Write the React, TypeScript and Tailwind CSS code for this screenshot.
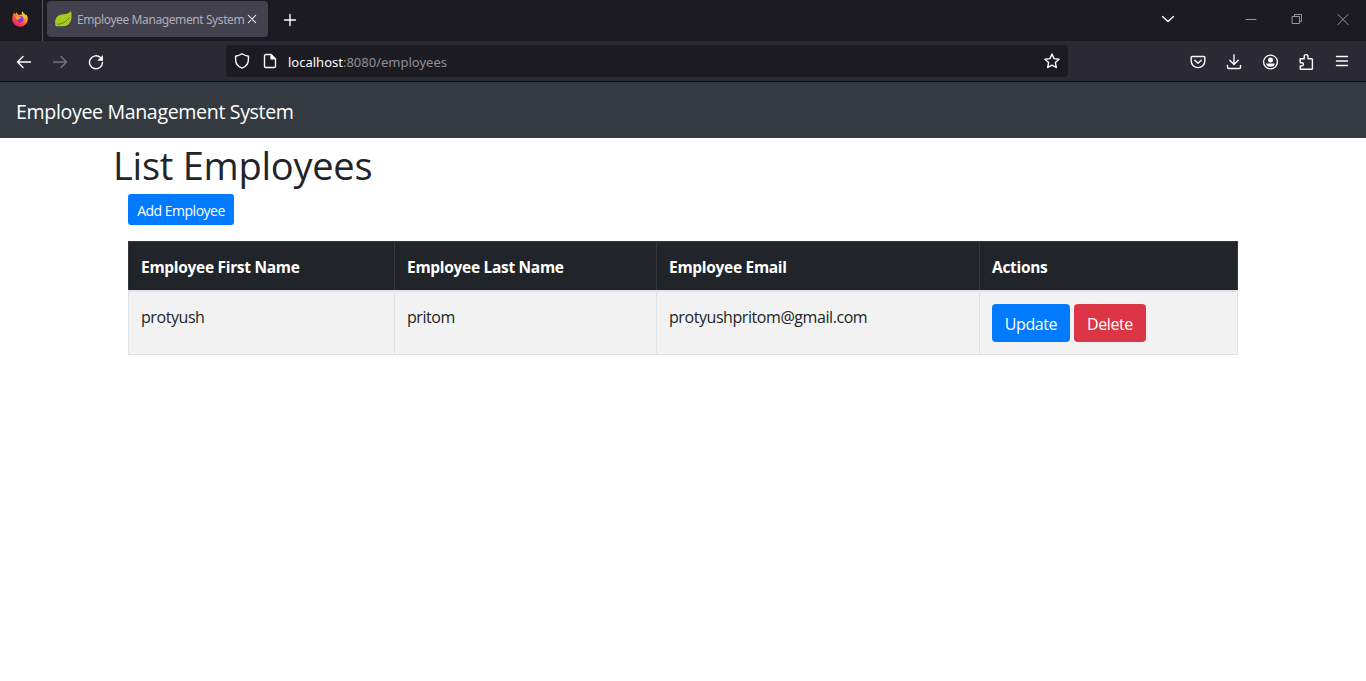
import React from 'react';

const stroke = { fill: 'none', stroke: 'currentColor', strokeLinecap: 'round', strokeLinejoin: 'round' } as const;

function Icon({ children, className = 'size-4 text-[#fbfbfe]', width = 1.4 }: { children: React.ReactNode; className?: string; width?: number }) {
  return (
    <svg viewBox="0 0 16 16" className={`block shrink-0 ${className}`} {...stroke} strokeWidth={width}>
      {children}
    </svg>
  );
}

function FirefoxLogo() {
  return (
    <svg viewBox="0 0 16 16" className="block size-4">
      <defs>
        <linearGradient id="fox" x1="0.85" y1="0.05" x2="0.2" y2="0.95">
          <stop offset="0" stopColor="#fff24a" />
          <stop offset="0.35" stopColor="#ff9a2b" />
          <stop offset="0.65" stopColor="#ff4a3d" />
          <stop offset="1" stopColor="#e7167f" />
        </linearGradient>
      </defs>
      <path fill="url(#fox)" d="M10.3.2c-.8 1-.8 2 .1 3L7 4C5.800 3.300 5.100 2.500 4.900 1.200 4.100 1.700 3.600 2.400 3.300 3.200c-.5-.3-.8-.8-.9-1.600C.9 3.200.2 5.500.2 8.200a7.800 7.600 0 0 0 15.600 0c0-2-.6-3.600-1.700-4.900.1.500.1.900 0 1.400C13.300 2.700 11 2.200 10.300.2Z" />
      <circle cx="8.200" cy="8.200" r="3.300" fill="#7a3fe0" />
      <path fill="#ff9a2b" d="M3.200 5.200c1.500-.8 3-.5 4.200.3.7.4 1.400.3 2 .4-.1.900-1.300 1-2 1.600-.6.5-.4 1-1 1.300-1 .4-2.600-.7-3.200-3.600Z" />
    </svg>
  );
}

function SpringLeaf() {
  return (
    <svg viewBox="0 0 17 16" className="block h-4 w-[17px] shrink-0">
      <path fill="#a9c922" d="M16 0c.9 3.500 1 8-1 11.500-1.700 3-4.700 4-8 3.800-2.500.1-5-.1-6.400-.4C-.5 11 .2 6.400 3.600 4.500 7.600 2.500 13.200 4 16 0Z" />
      <path fill="none" stroke="#5f8a10" strokeWidth="1" d="M2 13.200c5-.1 9.500-2 12.500-7.200" />
    </svg>
  );
}

function BrowserChrome() {
  return (
    <header className="font-['Noto_Sans','Open_Sans',sans-serif]">
      <div className="flex h-[41px] bg-[#1c1b22]">
        <div className="flex w-[43px] shrink-0 items-center border-r border-[#55545c] pb-[3px] pl-3">
          <FirefoxLogo />
        </div>
        <div className="mt-px ml-1 flex h-9 w-[221px] items-center rounded bg-[#42414d] pl-2">
          <SpringLeaf />
          <span className="ml-[5px] w-[168px] pt-px text-[12px] tracking-[-0.4px] whitespace-nowrap text-[#b0afb8]">Employee Management System</span>
          <Icon className="ml-px size-3 text-[#fbfbfe]" width={1.4}><path d="m3 3 10 10M13 3 3 13" /></Icon>
        </div>
        <div className="flex w-[43px] items-center justify-center pb-[2px]">
          <Icon><path d="M8 2.500v11M2.500 8h11" /></Icon>
        </div>
        <div className="ml-auto flex h-[37px] items-center">
          <Icon className="mr-[67px] size-4 text-[#fbfbfe]"><path d="m2.500 5.500 5.500 5 5.500-5" /></Icon>
          <Icon className="mr-[30px] size-4 text-[#97969d]" width={1}><path d="M3 8.500h10" /></Icon>
          <Icon className="mr-[30px] size-4 text-[#97969d]" width={1}><path d="M3.500 5.500h7v7h-7zM5.500 5.500v-2h7v7h-2" /></Icon>
          <Icon className="mr-[15px] size-4 text-[#97969d]" width={1}><path d="m3 3.500 10 10M13 3.500l-10 10" /></Icon>
        </div>
      </div>
      <div className="flex h-[41px] items-center border-b border-[#0c0c0d] bg-[#2b2a33]">
        <div className="flex w-[226px] shrink-0 items-center gap-5 pt-px pl-4">
          <Icon><path d="M14.500 8h-13M7 2.500 1.500 8 7 13.500" /></Icon>
          <Icon className="size-4 text-[#77767e]"><path d="M1.500 8h13M9 2.500 14.500 8 9 13.500" /></Icon>
          <Icon><path d="M14.500 8.500A6.500 6.500 0 1 1 12.500 3.600" /><path fill="currentColor" stroke="none" d="M15 1v5.800H9.200z" /></Icon>
        </div>
        <div className="flex h-8 w-[842px] items-center rounded bg-[#1c1b22] pr-2 pl-2">
          <Icon><path d="M8 .8C6 2.200 4 2.800 1.600 3.200v3.300c0 4 2.800 7.300 6.400 8.700 3.600-1.400 6.400-4.700 6.400-8.700V3.200C12 2.800 10 2.200 8 .8Z" /></Icon>
          <Icon className="ml-3 size-4 text-[#fbfbfe]"><path d="M9 1.500H3.800a1.300 1.300 0 0 0-1.300 1.300v10.400c0 .7.600 1.300 1.300 1.300h8.400c.7 0 1.300-.6 1.300-1.300V6z" /><path fill="currentColor" d="M9 1.800v4h4z" /></Icon>
          <span className="ml-[10px] pt-[3px] text-[13px] whitespace-nowrap text-[#8f8e96]"><span className="text-[#fbfbfe]">localhost</span>:8080/employees</span>
          <Icon className="ml-auto size-4 text-[#fbfbfe]"><path d="m8 1.100 2.100 4.500 4.900.6-3.600 3.400.9 4.900L8 12.100l-4.300 2.400.9-4.900L1 6.200l4.900-.6z" /></Icon>
        </div>
        <div className="ml-auto flex items-center gap-5 pt-px pr-4">
          <Icon><path d="M2 2.500h12c.5 0 .8.300.8.800v4a6.800 6.300 0 0 1-13.600 0v-4c0-.5.300-.8.800-.8Z" /><path d="m4.800 6.200 3.200 3 3.200-3" /></Icon>
          <Icon><path d="M8 .8v9.500M3.800 6.300 8 10.400l4.200-4.100M1.500 11.500v1.700c0 .7.500 1.300 1.300 1.300h10.400c.8 0 1.300-.6 1.300-1.300v-1.700" /></Icon>
          <Icon><circle cx="8.500" cy="8" r="6.900" /><circle cx="8.500" cy="5.900" r="2.500" fill="currentColor" stroke="none" /><path fill="currentColor" stroke="none" d="M4.200 9.500h8.600c0 2-1.800 3.300-4.300 3.300s-4.300-1.300-4.300-3.300Z" /></Icon>
          <Icon className="size-4 overflow-visible text-[#fbfbfe]"><path d="M2.200 4.800h4V2.500a1.900 1.900 0 0 1 3.800 0v2.300h3.600c.5 0 .8.300.8.800v8.800c0 .5-.3.800-.8.800H3c-.5 0-.8-.3-.8-.8V12h1.600a1.600 1.600 0 0 0 0-3.300H2.200z" /></Icon>
          <Icon><path d="M2.500 2.500h11M2.500 7h11M2.500 11.500h11" /></Icon>
        </div>
      </div>
    </header>
  );
}

const employees = [{ first: 'protyush', last: 'pritom', email: 'protyushpritom@gmail.com' }];

const head = 'h-[49px] border border-[#32383e] px-3 pt-[2px] text-left text-[15.5px] tracking-[-0.3px] font-bold whitespace-nowrap text-white border-b-2 border-b-[#dee2e6]';
const cell = 'h-16 border border-[#dee2e6] px-3 pt-[13px] align-top whitespace-nowrap';
const button = 'h-[38px] rounded px-3 pt-[3px] text-[16px] tracking-[-0.4px] text-white';

export default function App() {
  return (
    <div className="h-[681px] overflow-hidden bg-white font-['Open_Sans','Noto_Sans',sans-serif] text-[#212529]">
      <BrowserChrome />
      <nav className="flex h-14 items-center bg-[#343a40] px-4 pt-1 text-[19.6px] tracking-[-0.36px] text-white">Employee Management System</nav>
      <main className="mx-auto w-[1140px] px-[15px]">
        <h1 className="-ml-[15px] h-14 pt-[3px] text-[38px] leading-[48px] tracking-[-0.25px]">
          <span>List Employees</span>
        </h1>
        <button className="block h-[31px] w-[106px] rounded-[3px] bg-[#007bff] pt-px text-[14px] tracking-[-0.5px] whitespace-nowrap text-white">Add Employee</button>
        <table className="mt-4 w-[1109px] table-fixed border-collapse text-[16px] leading-6 tracking-[-0.43px]">
          <colgroup>
            <col className="w-[266px]" />
            <col className="w-[262px]" />
            <col className="w-[323px]" />
            <col className="w-[258px]" />
          </colgroup>
          <thead className="bg-[#212529]">
            <tr>
              <th className={head}>Employee First Name</th>
              <th className={head}>Employee Last Name</th>
              <th className={head}>Employee Email</th>
              <th className={head}>Actions</th>
            </tr>
          </thead>
          <tbody>
            {employees.map((e) => (
              <tr key={e.email} className="bg-[#f2f2f2]">
                <td className={cell}>{e.first}</td>
                <td className={cell}>{e.last}</td>
                <td className={cell}>{e.email}</td>
                <td className="h-16 border border-[#dee2e6] px-3 align-middle">
                  <div className="flex gap-1">
                    <button className={`${button} w-[78px] bg-[#007bff]`}>Update</button>
                    <button className={`${button} w-[72px] bg-[#dc3545]`}>Delete</button>
                  </div>
                </td>
              </tr>
            ))}
          </tbody>
        </table>
      </main>
    </div>
  );
}
